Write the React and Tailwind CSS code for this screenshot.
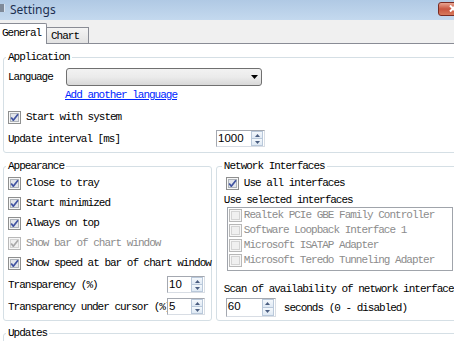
import React from 'react';

// Win7-style checkbox drawn as svg
function Check({ checked = false, disabled = false }) {
  const outer = disabled ? '#b8b8b8' : '#8e8f8f';
  const innerStroke = disabled ? '#d4d4d4' : '#aeb3b9';
  const innerFill = disabled ? '#f0f0f0' : '#e2e5ea';
  const mark = disabled ? '#a8a8a8' : '#3f52a0';
  return (
    <svg width="13" height="13" viewBox="0 0 13 13" className="shrink-0 block">
      <rect x="0.5" y="0.5" width="12" height="12" fill="#f7f7f7" stroke={outer} />
      <rect x="2.5" y="2.5" width="8" height="8" fill={innerFill} stroke={innerStroke} />
      {checked && (
        <path d="M3.2 6.4 L5.3 9.2 L10 3.2" fill="none" stroke={mark} strokeWidth="1.7" strokeLinejoin="round" />
      )}
    </svg>
  );
}

function CheckRow({ label, checked, disabled, className = '' }) {
  return (
    <div className={`flex items-center gap-[5px] h-[13px] ${className}`}>
      <Check checked={checked} disabled={disabled} />
      <span className={`leading-[13px] whitespace-nowrap ${disabled ? 'text-[#8c8c8c]' : ''}`}>{label}</span>
    </div>
  );
}

function Spin({ value, className = '' }) {
  return (
    <div className={`flex h-[17px] bg-white border border-[#a4a8b0] border-b-[#d8dde4] border-r-[#d8dde4] ${className}`}>
      <span className="flex-1 pl-[1px] font-[family-name:'Liberation_Sans',Arial,sans-serif] text-[11.5px] tracking-normal leading-[15px]">{value}</span>
      <div className="flex flex-col w-[12px] mr-[1px]">
        <div className="flex-1 flex items-center justify-center bg-gradient-to-b from-[#f4f8fc] to-[#dfe9f4] border border-[#b9c8da]">
          <svg width="5" height="3" viewBox="0 0 5 3"><path d="M0 3 L2.5 0 L5 3 Z" fill="#4a5d80" /></svg>
        </div>
        <div className="flex-1 flex items-center justify-center bg-gradient-to-b from-[#f4f8fc] to-[#dfe9f4] border border-t-0 border-[#b9c8da]">
          <svg width="5" height="3" viewBox="0 0 5 3"><path d="M0 0 L2.5 3 L5 0 Z" fill="#4a5d80" /></svg>
        </div>
      </div>
    </div>
  );
}

function Group({ title, className = '', legendClass = 'ml-[2px]', children }) {
  return (
    <fieldset className={`border border-[#d5dfe5] rounded-[3px] ${className}`}>
      <legend className={`px-[2px] leading-[12px] h-[12px] ${legendClass}`}>{title}</legend>
      {children}
    </fieldset>
  );
}

const adapters = [
  'Realtek PCIe GBE Family Controller',
  'Software Loopback Interface 1',
  'Microsoft ISATAP Adapter',
  'Microsoft Teredo Tunneling Adapter',
];

export default function App() {
  return (
    <div className="w-[454px] h-[341px] overflow-hidden bg-white flex flex-col font-[family-name:'Liberation_Mono',monospace] text-[11px] tracking-[-1px] text-black">
      {/* title bar */}
      <div className="h-[20px] shrink-0 flex items-center bg-gradient-to-b from-[#b0c9e4] to-[#c4d9ee]">
        <div className="w-[5px] h-[8px] mt-[-4px] bg-[#7f8a99] border-r border-[#d8e2ee]" />
        <span className="ml-[5px] font-[family-name:'Noto_Sans',sans-serif] text-[12px] tracking-normal text-[#1c2f50] leading-[16px]">Settings</span>
        <div className="ml-auto mr-[-14px] mt-[-3px] w-[30px] h-[14px] rounded-[3px] border border-[#7a2b22] bg-gradient-to-b from-[#e8a491] via-[#c8553f] to-[#d87a5c] flex items-center justify-center">
          <svg width="8" height="7" viewBox="0 0 8 7"><path d="M1 0.5 L7 6.5 M7 0.5 L1 6.5" stroke="#fff" strokeWidth="2" /></svg>
        </div>
      </div>

      {/* tabs */}
      <div className="h-[24px] shrink-0 flex items-end bg-[#f0f0f0] border-b border-[#898c95]">
        <div className="relative -mb-px h-[21px] w-[47px] bg-white border border-b-0 border-l-0 border-[#898c95] rounded-tr-[2px] pl-[2px] leading-[19px]">General</div>
        <div className="h-[16px] w-[42px] border border-b-0 border-l-0 border-[#898c95] bg-gradient-to-b from-[#f4f4f4] to-[#e2e2e2] pl-[4px] leading-[16px]">Chart</div>
      </div>

      {/* Application */}
      <Group title="Application" className="ml-[3px] mt-[7px] w-[470px] shrink-0 pb-[5px]">
        <div className="flex items-center mt-[5px] pl-[4px]">
          <span className="w-[58px] leading-[12px]">Language</span>
          <div className="w-[196px] h-[18px] rounded-[3px] border border-[#707070] bg-gradient-to-b from-[#f2f2f2] via-[#ebebeb] to-[#d8d8d8] flex items-center justify-end pr-[3px]">
            <svg width="7" height="4" viewBox="0 0 7 4"><path d="M0 0 L7 0 L3.5 4 Z" fill="#000" /></svg>
          </div>
        </div>
        <div className="mt-[3px] pl-[61px] leading-[12px] h-[12px]">
          <span className="text-[#0026ff] underline">Add another language</span>
        </div>
        <CheckRow label="Start with system" checked className="mt-[10px] pl-[4px]" />
        <div className="flex items-center mt-[6px] pl-[4px]">
          <span className="w-[208px] leading-[12px]">Update interval [ms]</span>
          <Spin value="1000" className="w-[49px]" />
        </div>
      </Group>

      <div className="flex mt-[7px] shrink-0">
        {/* Appearance */}
        <Group title="Appearance" className="ml-[3px] w-[208px] shrink-0 pb-[5px]">
          <div className="flex flex-col gap-[7px] mt-[5px] pl-[4px]">
            <CheckRow label="Close to tray" checked />
            <CheckRow label="Start minimized" checked />
            <CheckRow label="Always on top" checked />
            <CheckRow label="Show bar of chart window" checked disabled />
            <CheckRow label="Show speed at bar of chart window" checked />
          </div>
          <div className="flex items-center mt-[6px] pl-[4px]">
            <span className="w-[159px] overflow-hidden whitespace-nowrap leading-[12px]">Transparency (%)</span>
            <Spin value="10" className="w-[38px]" />
          </div>
          <div className="flex items-center mt-[5px] pl-[4px]">
            <span className="w-[159px] overflow-hidden whitespace-nowrap leading-[12px]">Transparency under cursor (%)</span>
            <Spin value="5" className="w-[38px]" />
          </div>
        </Group>

        {/* Network Interfaces */}
        <Group title="Network Interfaces" legendClass="ml-[5px]" className="ml-[4px] w-[260px] shrink-0 pb-[3px]">
          <CheckRow label="Use all interfaces" checked className="mt-[5px] pl-[9px]" />
          <div className="mt-[4px] pl-[7px] h-[12px] leading-[12px]">Use selected interfaces</div>
          <div className="mt-[1px] ml-[10px] w-[226px] h-[64px] border border-[#a0a4ab] flex flex-col">
            {adapters.map((a) => (
              <div key={a} className="h-[15px] flex items-center gap-[2px] pl-[1px]">
                <Check disabled />
                <span className="text-[#8c8c8c] whitespace-nowrap leading-[13px]">{a}</span>
              </div>
            ))}
          </div>
          <div className="mt-[12px] pl-[7px] h-[12px] leading-[12px] whitespace-nowrap">Scan of availability of network interfaces</div>
          <div className="flex items-center mt-[3px] pl-[9px]">
            <Spin value="60" className="w-[50px] h-[19px]" />
            <span className="ml-[8px] leading-[12px]">seconds (0 - disabled)</span>
          </div>
        </Group>
      </div>

      {/* Updates */}
      <Group title="Updates" className="ml-[3px] mt-[6px] w-[470px] h-[40px] shrink-0" />
    </div>
  );
}
